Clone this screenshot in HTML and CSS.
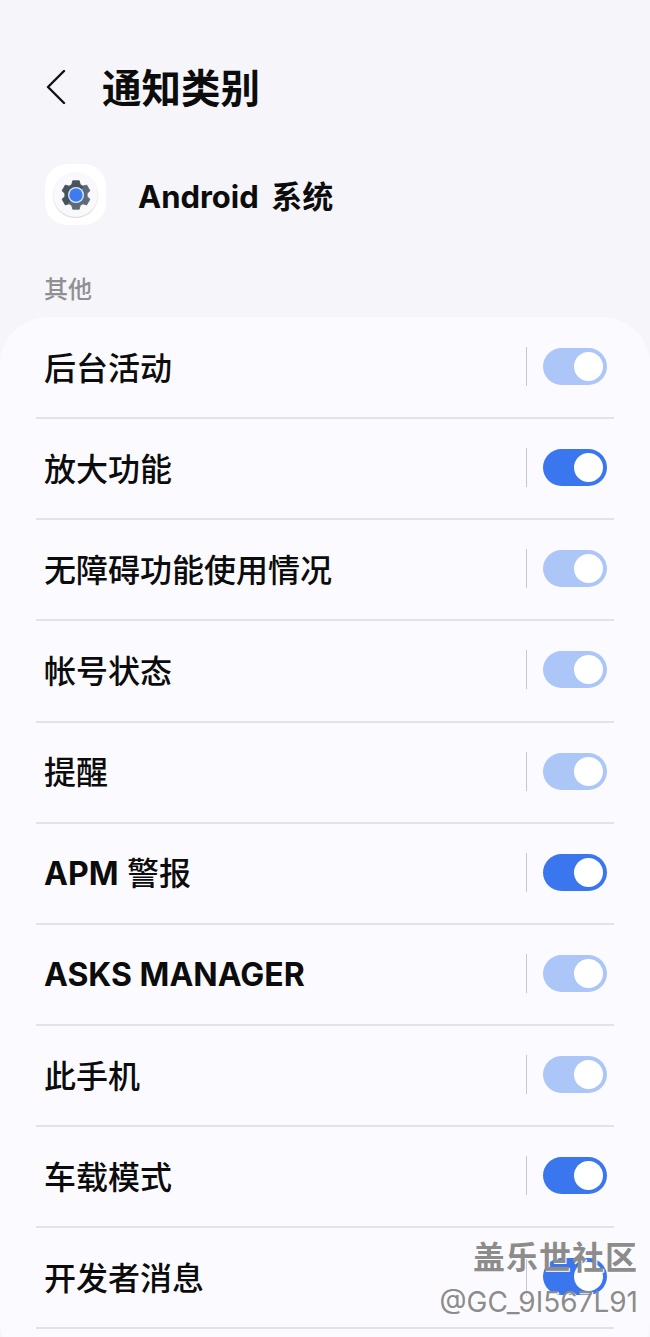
FILE: index.html
```html
<!DOCTYPE html>
<html lang="zh-CN">
<head>
  <meta charset="UTF-8" />
  <meta name="viewport" content="width=device-width, initial-scale=1.0"/>
  <title>通知类别</title>
  <link rel="stylesheet" href="styles.css">
</head>
<body>

  <header class="top-bar">
    <svg class="back-icon" width="22" height="36" viewBox="0 0 22 36">
      <path d="M19 1 L3 17 L19 33" fill="none" stroke="#111" stroke-width="2.4" stroke-linecap="round" stroke-linejoin="round"/>
    </svg>
    <h1>通知类别</h1>
  </header>

  <div class="app-row">
    <div class="app-icon">
      <div class="app-icon-disc">
        <svg width="30" height="30" viewBox="0 0 36 36">
          <defs>
            <linearGradient id="gearShade" x1="0" y1="0" x2="1" y2="1">
              <stop offset="0.5" stop-color="#46525c"/>
              <stop offset="0.5" stop-color="#5d6b77"/>
            </linearGradient>
          </defs>
          <!-- six tooth gear, one tooth straight up -->
          <polygon fill="url(#gearShade)" stroke="url(#gearShade)" stroke-width="1" stroke-linejoin="round" points="12.94,5.48 14.06,.95 21.94,.95 23.06,5.48 26.31,7.36 30.8,6.07 34.74,12.88 31.37,16.12 31.37,19.88 34.74,23.12 30.8,29.93 26.31,28.64 23.06,30.52 21.94,35.05 14.06,35.05 12.94,30.52 9.69,28.64 5.2,29.93 1.26,23.12 4.63,19.88 4.63,16.12 1.26,12.88 5.2,6.07 9.69,7.36"/>
          <circle cx="18" cy="18" r="9.6" fill="#dfe9fb"/>
          <circle cx="18" cy="18" r="8" fill="#3f7bf0"/>
        </svg>
      </div>
    </div>
    <span class="app-name">Android 系统</span>
  </div>

  <div class="section-label">其他</div>

  <section class="card">
    <div class="row"><span class="row-text">后台活动</span><span class="sep"></span><span class="toggle dim"></span></div>
    <div class="row"><span class="row-text">放大功能</span><span class="sep"></span><span class="toggle"></span></div>
    <div class="row"><span class="row-text">无障碍功能使用情况</span><span class="sep"></span><span class="toggle dim"></span></div>
    <div class="row"><span class="row-text">帐号状态</span><span class="sep"></span><span class="toggle dim"></span></div>
    <div class="row"><span class="row-text">提醒</span><span class="sep"></span><span class="toggle dim"></span></div>
    <div class="row"><span class="row-text"><b>APM</b> 警报</span><span class="sep"></span><span class="toggle"></span></div>
    <div class="row"><span class="row-text"><b>ASKS MANAGER</b></span><span class="sep"></span><span class="toggle dim"></span></div>
    <div class="row"><span class="row-text">此手机</span><span class="sep"></span><span class="toggle dim"></span></div>
    <div class="row"><span class="row-text">车载模式</span><span class="sep"></span><span class="toggle"></span></div>
    <div class="row"><span class="row-text">开发者消息</span><span class="sep"></span><span class="toggle"></span></div>
  </section>

  <div class="watermark">
    <div class="watermark-name">盖乐世社区</div>
    <div class="watermark-user">@GC_9I567L91</div>
  </div>

</body>
</html>
```

FILE: styles.css
```css
html, body {
  height: 1337px;
  overflow: hidden;
}

body {
  margin: 0;
  position: relative;
  background-color: #f5f5fa;
  color: #0c0c0c;
  font-family: Inter, "Noto Sans CJK SC", sans-serif;
}

.top-bar {
  display: flex;
  align-items: center;
  height: 36px;
  padding: 70px 0 0 45px;
}

.back-icon {
  flex: none;
}

.top-bar h1 {
  margin: 2px 0 0 35px;
  font-size: 39.5px;
  font-weight: 700;
  line-height: 36px;
}

.app-row {
  display: flex;
  align-items: center;
  margin-top: 58px;
  padding-left: 45px;
}

.app-icon {
  display: flex;
  align-items: center;
  justify-content: center;
  width: 61px;
  height: 61px;
  border-radius: 22px;
  background-color: #fff;
}

.app-icon-disc {
  display: flex;
  align-items: center;
  justify-content: center;
  width: 45px;
  height: 45px;
  border-radius: 50%;
  background-color: #f9f9fb;
  box-shadow: 0 1px 1px #d6d6d6;
}

.app-name {
  margin: 4px 0 0 32px;
  font-size: 31px;
  font-weight: 700;
  line-height: 36px;
  word-spacing: 5px;
}

.section-label {
  margin-top: 47px;
  padding-left: 44px;
  font-size: 24px;
  font-weight: 500;
  line-height: 36px;
  color: #909094;
}

.card {
  margin-top: 9px;
  padding: 1px 36px 40px;
  border-radius: 48px;
  background-color: #fbfbff;
}

.row {
  display: flex;
  align-items: center;
  box-sizing: border-box;
  height: 101.15px;
  padding: 0 7px 2px 8px;
  border-bottom: 2px solid #e3e3e7;
}

.row-text {
  flex: 1;
  font-size: 32px;
  font-weight: 500;
  line-height: 40px;
  padding-top: 4px;
}

.row-text b {
  font-weight: 700;
}

.sep {
  width: 1px;
  height: 39px;
  margin-right: 16px;
  background-color: #c8c8cc;
}

.toggle {
  position: relative;
  box-sizing: border-box;
  width: 64px;
  height: 37px;
  border-radius: 19px;
  background-color: #3a76ee;
}

.toggle::after {
  content: "";
  position: absolute;
  top: 4px;
  right: 4px;
  width: 29px;
  height: 29px;
  border-radius: 50%;
  background-color: #fff;
}

.toggle.dim {
  background-color: #adc6f8;
}

/* community stamp laid over the last rows */
.watermark {
  position: absolute;
  right: 12px;
  top: 1238px;
  text-align: right;
  color: #8c8c8c;
  text-shadow: 1px 1px 0 #fff;
}

.watermark-name {
  font-size: 32px;
  font-weight: 700;
  line-height: 40px;
  letter-spacing: 1px;
}

.watermark-user {
  font-size: 28px;
  line-height: 30px;
  margin-top: 9px;
}
```
